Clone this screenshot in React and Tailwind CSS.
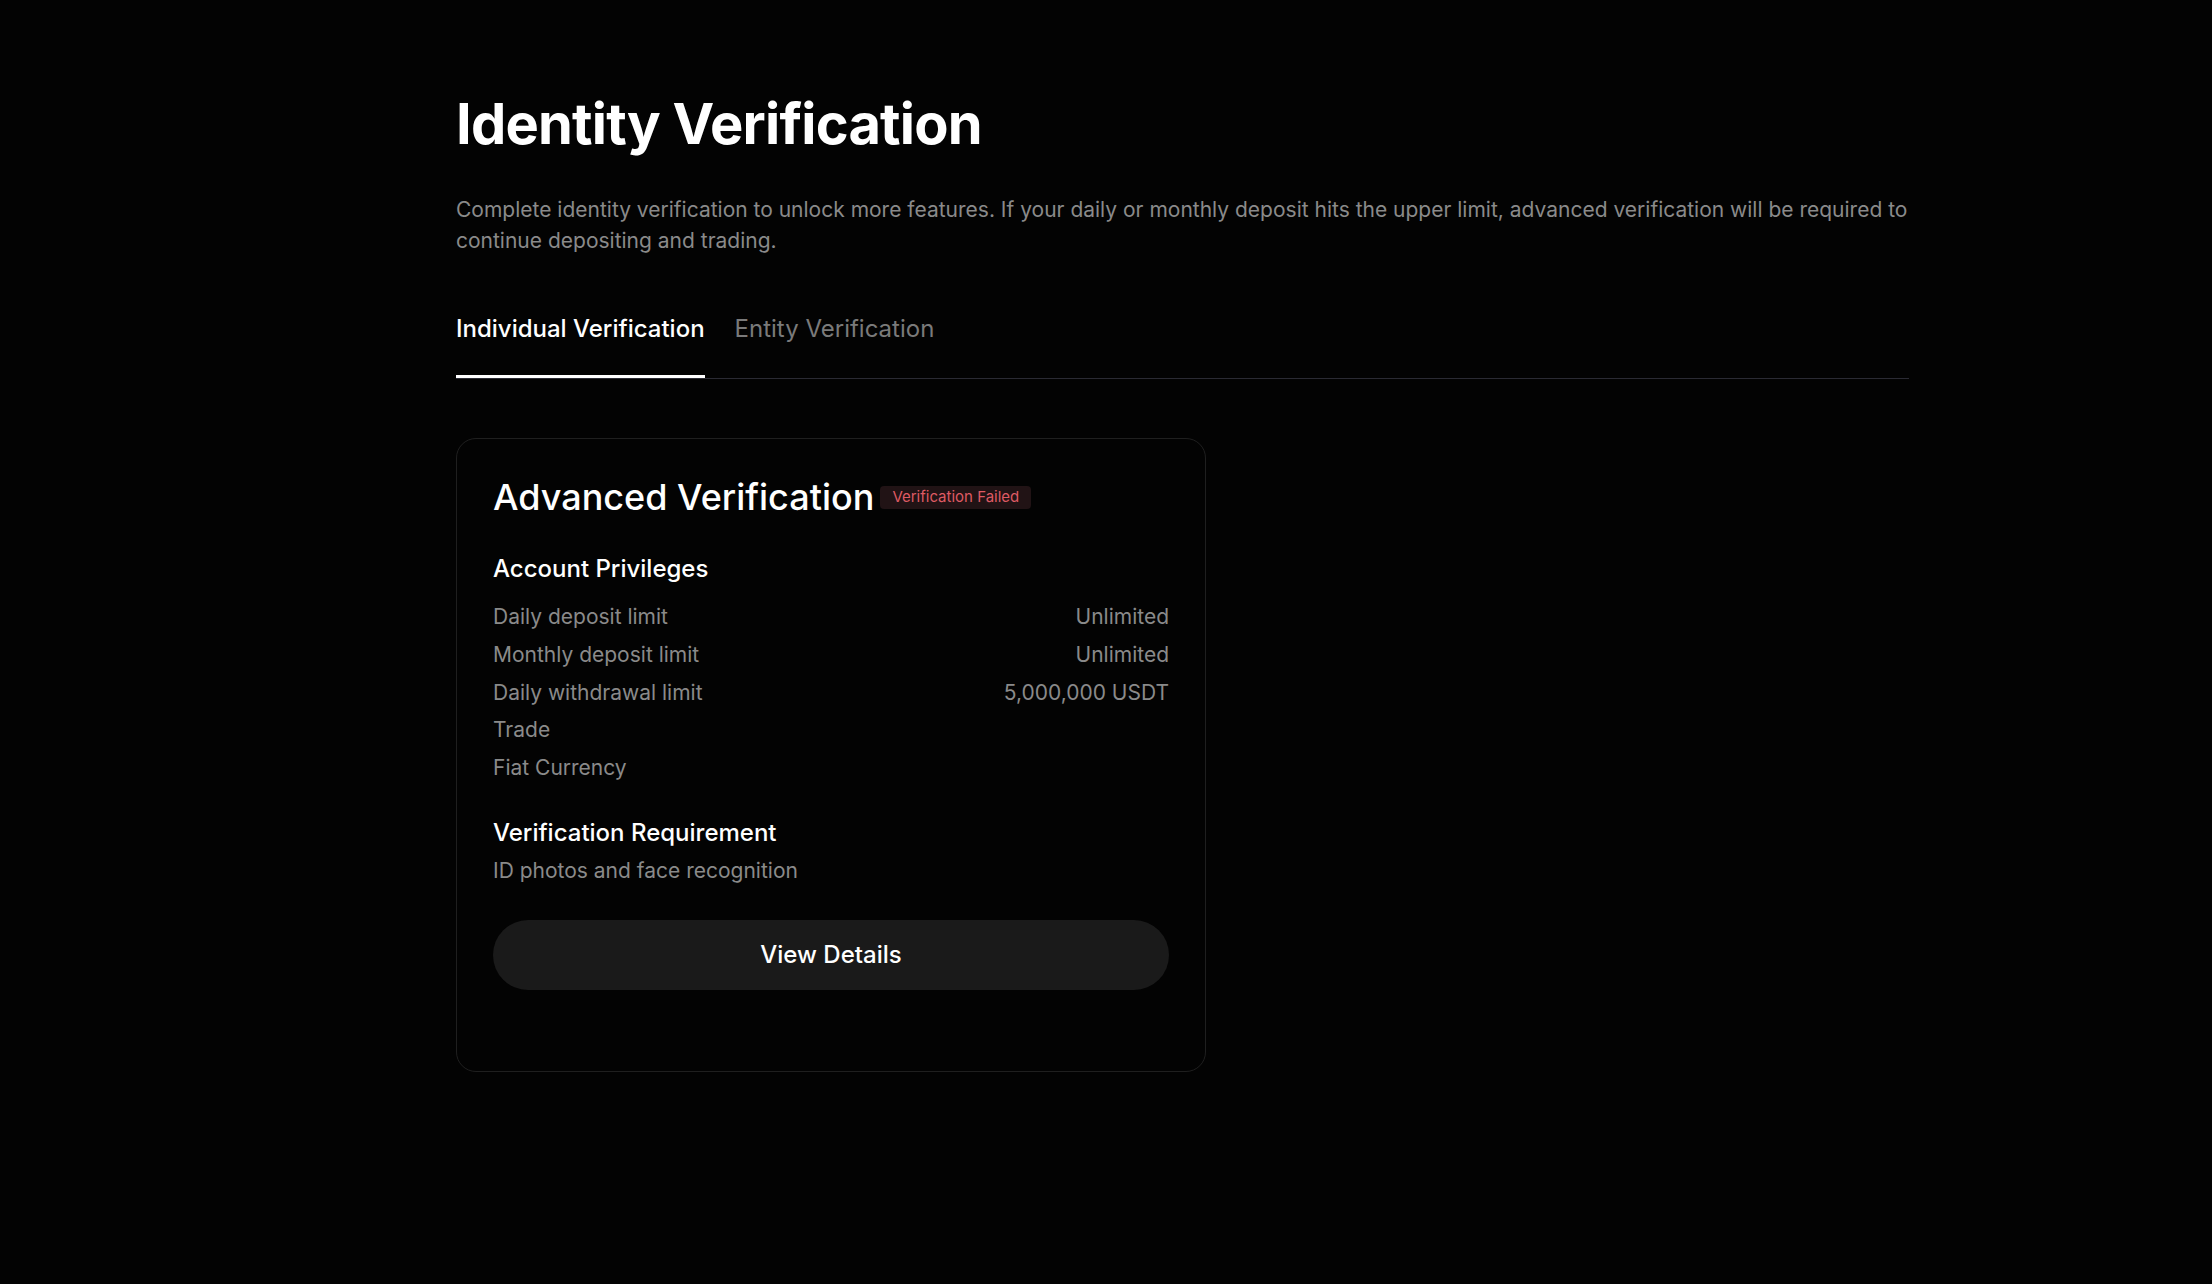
const privileges = [
  { label: 'Daily deposit limit', value: 'Unlimited' },
  { label: 'Monthly deposit limit', value: 'Unlimited' },
  { label: 'Daily withdrawal limit', value: '5,000,000 USDT' },
  { label: 'Trade', value: '' },
  { label: 'Fiat Currency', value: '' },
];

const VerificationCard = () => {
  return (
    <div className="mt-[59px] w-[750px] rounded-[20px] border border-[#1f1f1f] px-9 pt-[36px] pb-[81px]">
      <div className="flex items-center gap-[6px]">
        <h2 className="text-[36px] leading-[44px] font-medium text-white">Advanced Verification</h2>
        <span className="rounded-[4px] bg-[#211315] px-[12px] h-[23px] flex items-center text-[15px] text-[#de5a63]">
          Verification Failed
        </span>
      </div>

      <h3 className="mt-[34px] text-[24px] leading-[32px] font-medium text-white">Account Privileges</h3>
      <ul className="mt-[13px] text-[21px] leading-[37.75px] text-[#8a8a8a]">
        {privileges.map((p) => (
          <li key={p.label} className="flex justify-between">
            <span>{p.label}</span>
            <span>{p.value}</span>
          </li>
        ))}
      </ul>

      <h3 className="mt-[30px] text-[24px] leading-[32px] font-medium text-white">Verification Requirement</h3>
      <p className="mt-[6px] text-[21px] leading-[31px] text-[#8a8a8a]">ID photos and face recognition</p>

      <button className="mt-[34px] h-[70px] w-full rounded-full bg-[#1a1a1a] text-[24px] font-medium text-white">
        View Details
      </button>
    </div>
  );
};

const App = () => {
  return (
    <div className="min-h-screen bg-[#030303] font-['Inter',sans-serif]">
      <div className="ml-[456px] w-[1453px] pt-[91px] pb-20">
        <h1 className="text-[56px] leading-[67px] font-bold text-white tracking-[-0.8px]">Identity Verification</h1>
        <p className="mt-[36px] text-[21px] leading-[31px] text-[#8a8a8a]">
          Complete identity verification to unlock more features. If your daily or monthly deposit hits the upper limit, advanced
          verification will be required to continue depositing and trading.
        </p>

        <div className="mt-[57px] flex gap-[30px] border-b border-[#2a2a33]">
          <button className="border-b-[3px] border-white pb-[30px] text-[24px] leading-[32px] font-medium text-white">
            Individual Verification
          </button>
          <button className="border-b-[3px] border-transparent pb-[30px] text-[24px] leading-[32px] text-[#7a7a7a]">
            Entity Verification
          </button>
        </div>

        <VerificationCard />
      </div>
    </div>
  );
};

export default App;
